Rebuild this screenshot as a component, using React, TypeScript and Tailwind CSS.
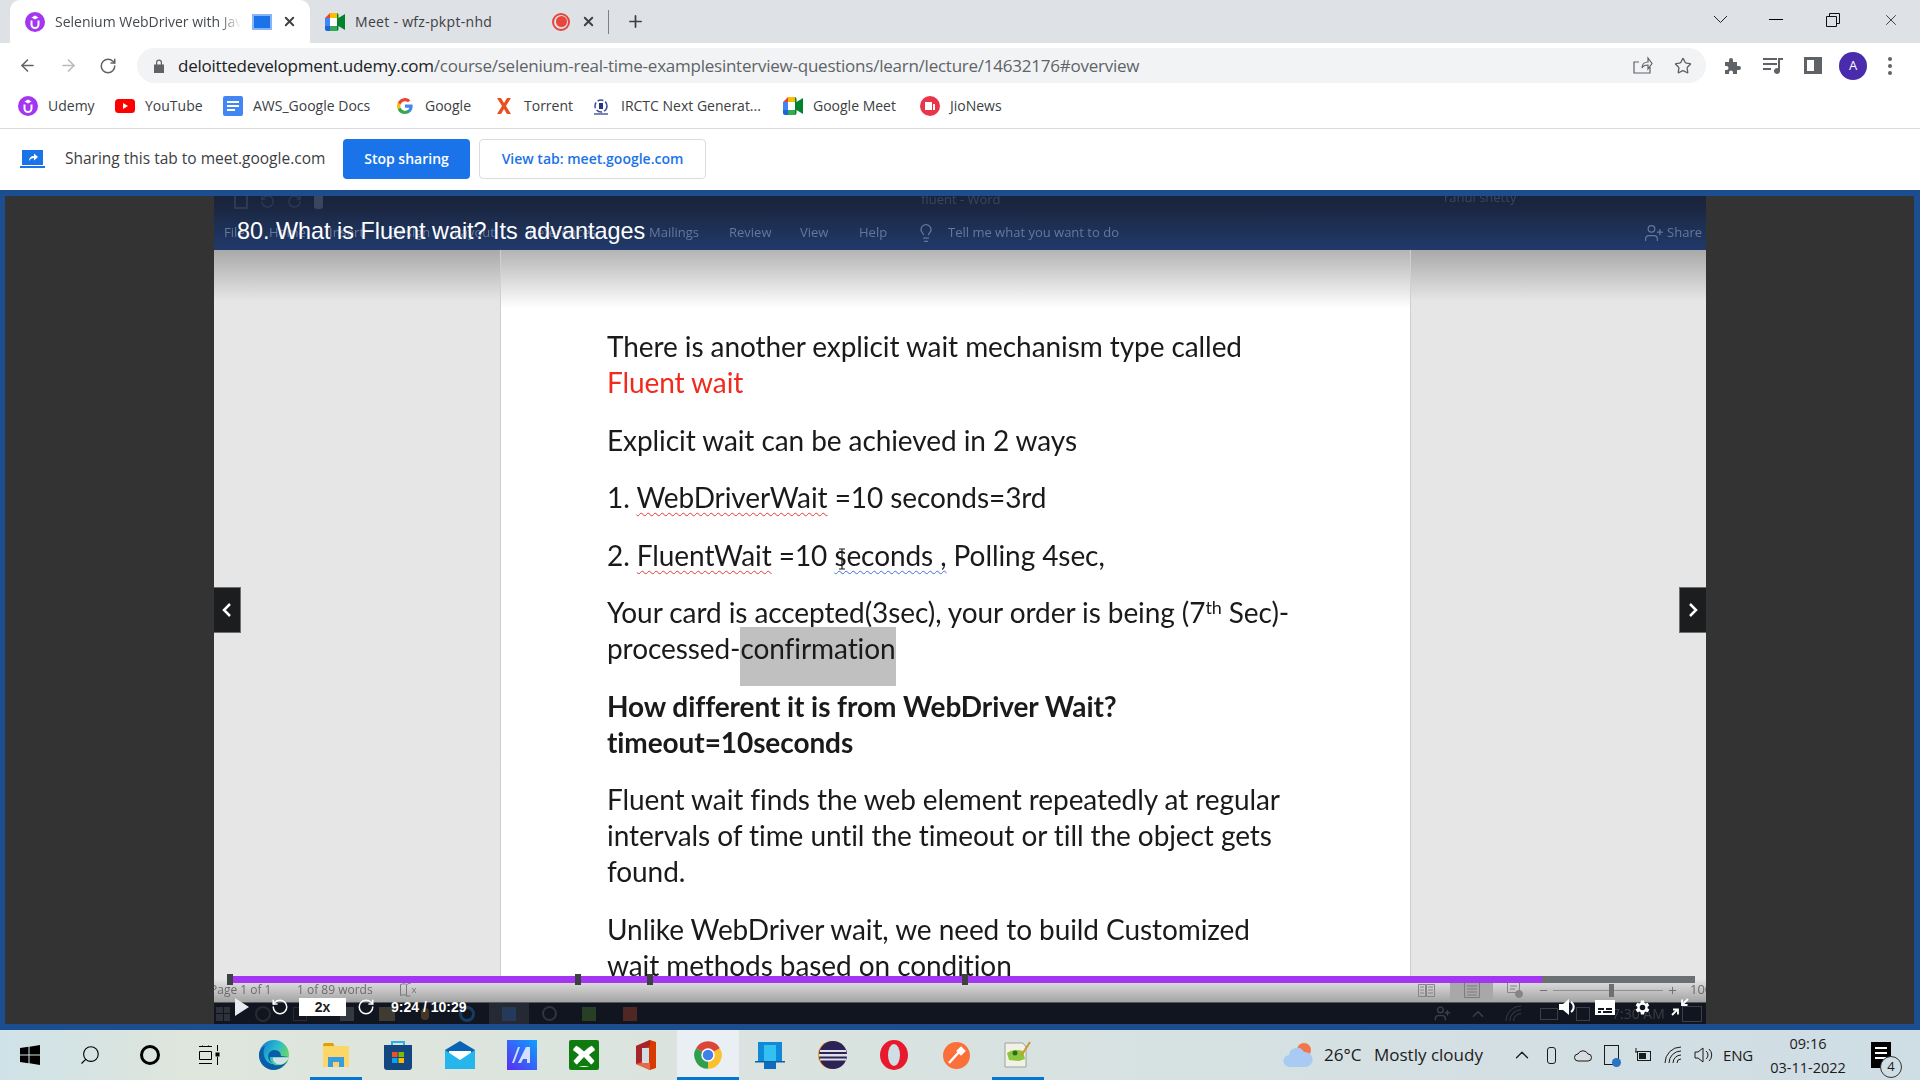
import { ArrowLeft, ArrowRight, ChevronUp, Lightbulb, Minus, Plus, RotateCw, Search, Star, UserPlus, X } from "lucide-react";
import type { ReactNode } from "react";

const UdemyIcon = () => (
  <svg width="20" height="20" viewBox="0 0 20 20">
    <circle cx="10" cy="10" r="10" fill="#a435f0" />
    <path d="M6.500 8.500v4a3.500 3.500 0 0 0 7 0v-4" fill="none" stroke="#fff" strokeWidth="2" />
    <path d="M10 3.500l3.500 2-3.500 2-3.500-2z" fill="#fff" />
  </svg>
);

const MeetIcon = () => (
  <svg width="20" height="18" viewBox="0 0 20 18">
    <path d="M0 5l5-5h7v5H5v4H0z" fill="#ea4335" />
    <path d="M5 0h7v5H5z" fill="#fbbc04" />
    <path d="M0 5h5v8H0z" fill="#4285f4" />
    <path d="M0 13h5v5H2a2 2 0 0 1-2-2z" fill="#1967d2" />
    <path d="M5 13h7v5H5z" fill="#34a853" />
    <path d="M12 0v18h0a2 2 0 0 0 1.500-2v-3L20 17V1l-6.500 4V2A2 2 0 0 0 12 0z" fill="#00832d" />
    <path d="M5 5h7v8H5z" fill="#fff" />
  </svg>
);

const GoogleIcon = () => (
  <svg width="16" height="16" viewBox="0 0 18 18">
    <path d="M17.600 9.200c0-.6-.1-1.200-.2-1.800H9v3.500h4.800a4 4 0 0 1-1.800 2.700v2.200h2.900c1.700-1.600 2.700-3.900 2.700-6.600z" fill="#4285f4" />
    <path d="M9 18c2.400 0 4.500-.8 5.900-2.200L12 13.600c-.8.500-1.800.9-3 .9-2.300 0-4.300-1.600-5-3.700H1v2.300A9 9 0 0 0 9 18z" fill="#34a853" />
    <path d="M4 10.700a5.400 5.400 0 0 1 0-3.400V5H1a9 9 0 0 0 0 8z" fill="#fbbc05" />
    <path d="M9 3.600c1.300 0 2.500.5 3.400 1.300L15 2.400A9 9 0 0 0 1 5l3 2.300c.7-2.100 2.700-3.700 5-3.700z" fill="#ea4335" />
  </svg>
);

const ChromeIcon = () => (
  <svg width="30" height="30" viewBox="0 0 24 24">
    <path d="M12 12L2.470 6.500A11 11 0 0 1 21.530 6.500Z" fill="#db4437" />
    <path d="M12 12L21.530 6.500A11 11 0 0 1 12 23Z" fill="#fbc02d" />
    <path d="M12 12L12 23A11 11 0 0 1 2.470 6.500Z" fill="#2e9e4f" />
    <circle cx="12" cy="12" r="5.400" fill="#fff" />
    <circle cx="12" cy="12" r="4.200" fill="#3f80ea" />
  </svg>
);

const bookmarks: { label: string; icon: ReactNode; width: string }[] = [
  { label: "Udemy", icon: <UdemyIcon />, width: "w-[97px]" },
  {
    label: "YouTube",
    icon: (
      <svg width="20" height="14" viewBox="0 0 20 14">
        <rect width="20" height="14" rx="3.500" fill="#f00" />
        <path d="M8 4l5 3-5 3z" fill="#fff" />
      </svg>
    ),
    width: "w-[108px]",
  },
  {
    label: "AWS_Google Docs",
    icon: (
      <svg width="20" height="20" viewBox="0 0 20 20">
        <rect width="20" height="20" rx="2" x="0" fill="#4285f4" />
        <path d="M4 5h12v2H4zM4 9h12v2H4zM4 13h8v2H4z" fill="#fff" />
      </svg>
    ),
    width: "w-[172px]",
  },
  { label: "Google", icon: <GoogleIcon />, width: "w-[99px]" },
  {
    label: "Torrent",
    icon: (
      <svg width="16" height="16" viewBox="0 0 16 16">
        <path d="M1 0h4l3 5 3-5h4l-5 8 5 8h-4l-3-5-3 5H1l5-8z" fill="#e8501f" />
      </svg>
    ),
    width: "w-[97px]",
  },
  {
    label: "IRCTC Next Generat...",
    icon: (
      <svg width="20" height="20" viewBox="0 0 20 20">
        <circle cx="10" cy="10" r="6" fill="none" stroke="#3b4f9c" strokeWidth="1.500" strokeDasharray="6 2" />
        <path d="M8 7h4v6H8z" fill="#27357e" />
        <path d="M3 18h14" stroke="#7b86b8" strokeWidth="2" />
      </svg>
    ),
    width: "w-[192px]",
  },
  { label: "Google Meet", icon: <MeetIcon />, width: "w-[137px]" },
  {
    label: "JioNews",
    icon: (
      <svg width="20" height="20" viewBox="0 0 20 20">
        <circle cx="10" cy="10" r="10" fill="#e8354a" />
        <path d="M5 6h7v8H5zM13 8h2v6h-2z" fill="#fff" />
      </svg>
    ),
    width: "w-auto",
  },
];

const TaskSlot = ({ children, active, running }: { children: ReactNode; active?: boolean; running?: boolean }) => (
  <div className={`relative flex h-[50px] w-[62px] items-center justify-center ${active ? "bg-[#eaeff4]" : ""}`}>
    {children}
    {active && <div className="absolute right-0 bottom-0 left-0 h-[3px] bg-[#0078d4]" />}
    {running && <div className="absolute right-[5px] bottom-0 left-[5px] h-[3px] bg-[#0078d4]" />}
  </div>
);

const Page = () => (
  <div className="h-full overflow-hidden bg-gradient-to-b from-[#b4b4b4] from-0% via-white via-[8%] to-white pt-[78px] pl-[106px] font-['Lato',sans-serif] text-[28px] leading-[36px] tracking-[-0.08px] text-[#1a1a1a] blur-[0.35px]">
    <p className="mb-[21.500px]">
      There is another explicit wait mechanism type called
      <br />
      <span className="text-[#f02b1d]">Fluent wait</span>
    </p>
    <p className="mb-[21.500px]">Explicit wait can be achieved in 2 ways</p>
    <p className="mb-[21.500px]">
      1. <span className="underline decoration-[#e53935] decoration-wavy decoration-1 underline-offset-4">WebDriverWait</span> =10 seconds=3rd
    </p>
    <p className="mb-[21.500px]">
      2. <span className="underline decoration-[#e53935] decoration-wavy decoration-1 underline-offset-4">FluentWait</span> =10{" "}
      <span className="relative underline decoration-[#3f6fd8] decoration-wavy decoration-1 underline-offset-4">
        seconds ,
        <svg width="10" height="22" viewBox="0 0 10 22" fill="none" stroke="#1a1a1a" strokeWidth="1.200" className="absolute top-[10px] left-[3px]">
          <path d="M2 1h6M5 1v20M2 21h6" />
        </svg>
      </span>{" "}
      Polling 4sec,
    </p>
    <p className="mb-[21.500px]">
      Your card is accepted(3sec), your order is being (7
      <sup className="text-[18px] leading-none">th</sup> Sec)-
      <br />
      processed-<span className="bg-[#c0c0c0] pt-[4px] pb-[21px]">confirmation</span>
    </p>
    <p className="mb-[21.500px] font-bold">
      How different it is from WebDriver Wait?
      <br />
      timeout=10seconds
    </p>
    <p className="mb-[21.500px]">
      Fluent wait finds the web element repeatedly at regular
      <br />
      intervals of time until the timeout or till the object gets
      <br />
      found.
    </p>
    <p>
      Unlike WebDriver wait, we need to build Customized
      <br />
      wait methods based on condition
    </p>
  </div>
);

const VideoPanel = () => (
  <div className="relative flex w-[1492px] flex-col overflow-hidden">
    {/* recorded word window */}
    <div className="relative h-[54px] shrink-0 bg-gradient-to-b from-[#192237] to-[#203a6b] font-['Open_Sans',sans-serif] text-[13px] text-[#66779a] blur-[0.4px]">
      <div className="absolute top-[-3px] left-[20px] flex items-center gap-[12px] text-[#2f3a52]">
        <div className="h-[16px] w-[14px] border-2 border-[#2f3a52]" />
        <RotateCw size={15} className="-scale-x-100" />
        <RotateCw size={15} />
        <div className="h-[15px] w-[9px] rounded-[3px] bg-[#3a465f]" />
      </div>
      <span className="absolute top-[-6px] left-[707px] text-[#3a465f]">fluent - Word</span>
      <span className="absolute top-[-8px] left-[1230px] text-[13px] text-[#3a465f]">rahul shetty</span>
      <div className="absolute top-[27px] left-[10px] flex h-[20px] items-center">
        <span className="w-[45px]">File</span>
        <span className="w-[60px]">Home</span>
        <span className="w-[60px]">Insert</span>
        <span className="w-[65px]">Design</span>
        <span className="w-[75px]">Layout</span>
        <span className="w-[120px]">References</span>
        <span className="w-[80px]">Mailings</span>
        <span className="w-[71px]">Review</span>
        <span className="w-[59px]">View</span>
        <span className="w-[57px]">Help</span>
        <Lightbulb size={20} strokeWidth={1.5} className="mr-[12px]" />
        <span>Tell me what you want to do</span>
      </div>
      <div className="absolute top-[27px] right-[4px] flex h-[20px] items-center gap-[3px]">
        <UserPlus size={20} strokeWidth={1.5} />
        <span>Share</span>
      </div>
    </div>

    <div className="flex min-h-0 flex-1">
      <div className="w-[287px] shrink-0 border-r border-[#cfcfcf] bg-gradient-to-b from-[#a9a9a9] from-0% via-[#e6e6e7] via-[7%] to-[#e6e6e7]" />
      <div className="w-[909px] shrink-0">
        <Page />
      </div>
      <div className="flex-1 border-l border-[#cfcfcf] bg-gradient-to-b from-[#a9a9a9] from-0% via-[#e6e6e7] via-[7%] to-[#e6e6e7]" />
    </div>

    {/* word status bar */}
    <div className="flex h-[25px] shrink-0 items-center justify-between border-b border-[#55585c] bg-gradient-to-b from-[#e8e8e8] to-[#a4a4a4] font-['Open_Sans',sans-serif] text-[12px] text-[#6b6b6b] blur-[0.3px]">
      <div className="flex items-center">
        <span className="ml-[-4px] w-[87px]">Page 1 of 1</span>
        <span className="w-[103px]">1 of 89 words</span>
        <svg width="17" height="14" viewBox="0 0 17 14" fill="none" stroke="#7a7a7a">
          <path d="M.5 1.500c3-1 5-1 6 .5v11c-1-1.500-3-1.500-6-.5zM6.500 2c1-1.500 2-1.500 4-1.500M6.500 13h4M12 5l4 5M16 5l-4 5" />
        </svg>
      </div>
      <div className="flex h-full items-center">
        <svg width="17" height="15" viewBox="0 0 17 15" fill="none" stroke="#858585" className="mr-[15px]">
          <path d="M.5 1.500h7v12h-7zM8.500 1.500h8v12h-8zM2 4h4M2 7h4M2 10h4M10 4h5M10 7h5M10 10h5" />
        </svg>
        <div className="flex h-full w-[43px] items-center justify-center bg-[#a8a8a8]">
          <svg width="16" height="16" viewBox="0 0 16 16" fill="none" stroke="#7c7c7c">
            <path d="M.5.500h15v15H.5zM3 4h10M3 7h10M3 10h10M3 13h10" />
          </svg>
        </div>
        <svg width="16" height="16" viewBox="0 0 16 16" fill="none" stroke="#858585" className="mr-[15px] ml-[14px]">
          <path d="M.5.500h12v10H.5zM3 4h7M3 7h5" />
          <circle cx="12" cy="12" r="3.500" fill="#858585" />
        </svg>
        <Minus size={11} />
        <div className="relative mx-[4px] h-[1px] w-[110px] bg-[#909090]">
          <div className="absolute top-[-6px] left-[56px] h-[13px] w-[5px] bg-[#6f6f6f]" />
        </div>
        <Plus size={11} />
        <span className="ml-[12px] w-[16px] overflow-hidden text-[13px]">100</span>
      </div>
    </div>

    {/* word window taskbar */}
    <div className="relative flex h-[21px] shrink-0 items-center overflow-hidden bg-[#11151f] pl-[2px] blur-[0.5px]">
      <div className="flex items-center opacity-50">
        <div className="grid h-[14px] w-[14px] grid-cols-2 gap-[1px]">
          <div className="bg-[#4a4e56]" />
          <div className="bg-[#4a4e56]" />
          <div className="bg-[#4a4e56]" />
          <div className="bg-[#4a4e56]" />
        </div>
        <div className="ml-[25px] h-[16px] w-[16px] rounded-full border-2 border-[#3e4249]" />
        <div className="ml-[22px] h-[14px] w-[14px] border border-[#3e4249]" />
        <div className="ml-[33px] h-[14px] w-[14px] bg-[#5a5d61]" />
        <div className="ml-[25px] h-[14px] w-[16px] bg-[#6d6248]" />
        <div className="ml-[26px] h-[12px] w-[8px] rounded-full bg-[#7a5a28]" />
        <div className="ml-[30px] h-[16px] w-[16px] rounded-full border-[3px] border-[#1b64a8]" />
        <div className="ml-[14px] flex h-[21px] w-[40px] items-center justify-center bg-[#3a3e48]">
          <div className="h-[14px] w-[14px] bg-[#3a5f96]" />
        </div>
        <div className="ml-[13px] h-[15px] w-[15px] rounded-full border-2 border-[#50545a]" />
        <div className="ml-[25px] h-[14px] w-[14px] bg-[#3e6b2a]" />
        <div className="ml-[27px] h-[14px] w-[14px] bg-[#8e3a2a]" />
      </div>
      <div className="absolute left-[1220px] flex items-center gap-[18px] text-[#3b3f46]">
        <UserPlus size={17} />
        <ChevronUp size={18} />
        <svg width="17" height="17" viewBox="0 0 18 18" fill="none" stroke="#3b3f46">
          <path d="M1 17A16 16 0 0 1 17 1M5 17A12 12 0 0 1 17 5M9 17a8 8 0 0 1 8-8" />
        </svg>
        <div className="h-[12px] w-[18px] border border-[#3b3f46]" />
        <div className="h-[14px] w-[14px] border border-[#3b3f46]" />
      </div>
      <span className="absolute left-[1398px] font-['Open_Sans',sans-serif] text-[14px] text-[#3b3f46]">7:30 AM</span>
      <div className="absolute left-[1468px] h-[16px] w-[20px] border border-[#3b3f46]" />
    </div>

    {/* overlay: course player */}
    <div className="absolute top-[18px] left-[23px] font-['Liberation_Sans',sans-serif] text-[23.400px] leading-[34px] text-white">
      80. What is Fluent wait? Its advantages
    </div>

    <button type="button" className="absolute top-[391px] left-0 flex h-[46px] w-[27px] items-center justify-center border border-l-0 border-[#6a6f73] bg-[#1c1d1f] text-white">
      <svg width="12" height="16" viewBox="0 0 12 16" fill="none" stroke="currentColor" strokeWidth="2.500"><path d="M9 2L3 8l6 6" /></svg>
    </button>
    <button type="button" className="absolute top-[391px] right-0 flex h-[46px] w-[27px] items-center justify-center border border-r-0 border-[#6a6f73] bg-[#1c1d1f] text-white">
      <svg width="12" height="16" viewBox="0 0 12 16" fill="none" stroke="currentColor" strokeWidth="2.500"><path d="M3 2l6 6-6 6" /></svg>
    </button>

    <div className="absolute top-[780px] left-[16px] h-[7px] w-[1465px] bg-[#6a6f73]">
      <div className="h-full w-[1312px] bg-[#a435f0]" />
      <div className="absolute top-[-2px] left-[-3px] h-[11px] w-[6px] bg-[#3e4143]" />
      <div className="absolute top-[-2px] left-[345px] h-[11px] w-[6px] bg-[#3e4143]" />
      <div className="absolute top-[-2px] left-[417px] h-[11px] w-[6px] bg-[#3e4143]" />
      <div className="absolute top-[-2px] left-[732px] h-[11px] w-[6px] bg-[#3e4143]" />
    </div>

    <div className="absolute top-[802px] left-[21px] flex h-[18px] items-center text-white">
      <svg width="14" height="18" viewBox="0 0 14 18" className="mr-[22px]"><path d="M0 0l14 9-14 9z" fill="#e8eaee" /></svg>
      <RotateCw size={18} strokeWidth={2} className="mr-[10px] -scale-x-100" />
      <span className="flex h-[18px] w-[47px] items-center justify-center bg-white font-['Liberation_Sans',sans-serif] text-[14px] font-bold text-[#1c1d1f]">2x</span>
      <RotateCw size={18} strokeWidth={2} className="mr-[16px] ml-[11px]" />
      <span className="font-['Liberation_Sans',sans-serif] text-[14px] font-bold">9:24 / 10:29</span>
    </div>

    <div className="absolute top-[801px] left-[1345px] flex h-[20px] items-center text-white">
      <svg width="18" height="18" viewBox="0 0 18 18" className="mr-[18px]">
        <path d="M0 6h4l6-5v16l-6-5H0z" fill="#fff" />
        <path d="M12 4a6 6 0 0 1 0 10" fill="none" stroke="#fff" strokeWidth="2" />
      </svg>
      <svg width="20" height="17" viewBox="0 0 20 17" className="mr-[18px]">
        <path d="M0 1h20v15H0zM3 9v2h6V9zm8 0v2h6V9zM3 12v2h3v-2zm5 0v2h9v-2z" fill="#fff" fillRule="evenodd" />
      </svg>
      <svg width="19" height="19" viewBox="0 0 24 24" className="mr-[19px]">
        <path d="M19.400 13a7.500 7.500 0 0 0 0-2l2.100-1.600-2-3.500-2.500 1a7.500 7.500 0 0 0-1.700-1L15 3.300h-4l-.4 2.600a7.500 7.500 0 0 0-1.700 1l-2.500-1-2 3.500L6.500 11a7.500 7.500 0 0 0 0 2l-2.100 1.600 2 3.500 2.500-1c.5.400 1.100.700 1.700 1l.4 2.600h4l.4-2.600c.6-.3 1.200-.6 1.700-1l2.500 1 2-3.500zM13 15.500a3.500 3.500 0 1 1 0-7 3.500 3.500 0 0 1 0 7z" fill="#fff" fillRule="evenodd" transform="translate(-1 0)" />
      </svg>
      <svg width="18" height="18" viewBox="0 0 18 18" fill="none" stroke="#fff" strokeWidth="1.800">
        <path d="M1 17l5-5M2 11.500h5v5M17 1l-5 5M11 1.500V7h5.500" />
      </svg>
    </div>
  </div>
);

const Taskbar = () => (
  <div className="flex h-[50px] shrink-0 items-center bg-gradient-to-r from-[#cfe2e8] via-[#dfe6dc] via-[10%] to-[#cfdde5] font-['Open_Sans',sans-serif] text-[#1b1b1b]">
    <div className="flex h-full w-[60px] items-center justify-center">
      <svg width="20" height="20" viewBox="0 0 20 20" fill="#000">
        <path d="M0 3l8.500-1.200v7.700H0zM9.500 1.700L20 0v9.500H9.500zM0 10.500h8.500v7.700L0 17zM9.500 10.500H20V20L9.500 18.300z" />
      </svg>
    </div>
    <div className="flex h-full w-[60px] items-center justify-center">
      <Search size={22} strokeWidth={1.2} className="-scale-x-100" color="#000" />
    </div>
    <div className="flex h-full w-[60px] items-center justify-center">
      <div className="h-[20px] w-[20px] rounded-full border-[3px] border-black" />
    </div>
    <div className="flex h-full w-[60px] items-center justify-center">
      <svg width="22" height="20" viewBox="0 0 22 20" fill="none" stroke="#000">
        <path d="M0 1.500h13M3.500 1.500V.5M9.500 1.500V.5M.5 6.500h12v8H.5zM0 18.500h13M18.500 0v6M18.500 12v8" />
        <rect x="17" y="8" width="3" height="3" fill="#000" />
      </svg>
    </div>
    <div className="ml-[3px] flex">
      <TaskSlot>
        <svg width="30" height="30" viewBox="0 0 30 30">
          <defs>
            <linearGradient id="edgeTop" x1="0" y1="0" x2="1" y2="0.600">
              <stop offset="0" stopColor="#0c70c4" />
              <stop offset="0.500" stopColor="#28b8d4" />
              <stop offset="1" stopColor="#6fdc5c" />
            </linearGradient>
          </defs>
          <circle cx="15" cy="15" r="15" fill="url(#edgeTop)" />
          <path d="M30 17H11a7 7 0 0 0 9 8c3 0 7-2 9-5-3 6-9 10-14 10C6 30 0 23 0 15c0-4 3-8 6-9-4 8 1 18 8 18-6-3-7-13 1-14 5 0 7 3 7 6z" fill="#0a5ea8" />
          <path d="M30 17.500H14c-1 4 3 7 7 7 3 0 6-2 8-5z" fill="#cfe2e8" />
        </svg>
      </TaskSlot>
      <TaskSlot running>
        <svg width="28" height="24" viewBox="0 0 28 24">
          <path d="M1 2a2 2 0 0 1 2-2h8l2 4H1z" fill="#dfa100" />
          <path d="M1 3h26v21H1z" fill="#fbd767" />
          <path d="M6 24V14h16v10h-5v-5h-6v5z" fill="#3b9be0" />
        </svg>
      </TaskSlot>
      <TaskSlot>
        <svg width="30" height="30" viewBox="0 0 30 30">
          <path d="M9 6V2h12v4" fill="none" stroke="#2ab2e8" strokeWidth="2" />
          <path d="M1 5h28v22a3 3 0 0 1-3 3H4a3 3 0 0 1-3-3z" fill="#14467f" />
          <path d="M9 12h5.500v5H9z" fill="#f25022" />
          <path d="M15.500 12H21v5h-5.500z" fill="#7fba00" />
          <path d="M9 18h5.500v5H9z" fill="#00a4ef" />
          <path d="M15.500 18H21v5h-5.500z" fill="#ffb900" />
        </svg>
      </TaskSlot>
      <TaskSlot>
        <svg width="30" height="28" viewBox="0 0 30 28">
          <path d="M0 9L15 0l15 9v19H0z" fill="#0a64b4" />
          <path d="M4 10h22v6l-11 7-11-7z" fill="#fff" />
          <path d="M0 9l15 10 15-10v19H0z" fill="#26b6ec" />
        </svg>
      </TaskSlot>
      <TaskSlot>
        <svg width="30" height="30" viewBox="0 0 30 30">
          <defs>
            <linearGradient id="appBlue" x1="0" y1="1" x2="1" y2="0">
              <stop offset="0" stopColor="#5b2df0" />
              <stop offset="1" stopColor="#0da0ff" />
            </linearGradient>
          </defs>
          <rect width="30" height="30" fill="url(#appBlue)" />
          <path d="M5 23L11 7h2L7 23zM11 23l8-16h4v16h-3v-4h-4l-2 4z" fill="#d5e0ff" />
        </svg>
      </TaskSlot>
      <TaskSlot>
        <svg width="30" height="30" viewBox="0 0 30 30">
          <rect width="30" height="30" rx="2" fill="#107c10" />
          <circle cx="15" cy="15" r="12" fill="#fff" />
          <path d="M15 11.500c-3-3-6-5-8-6L4 3h22l-3 2.500c-2 1-5 3-8 6z" fill="#107c10" />
          <path d="M15 17c-3 3-7 7-8 9h16c-1-2-5-6-8-9z" fill="#107c10" />
          <path d="M1 8c3 2 7 5 9 7-2 2-6 6-8 9zM29 8c-3 2-7 5-9 7 2 2 6 6 8 9z" fill="#107c10" />
        </svg>
      </TaskSlot>
      <TaskSlot>
        <svg width="24" height="30" viewBox="0 0 24 30">
          <path d="M16 0L2 6v18l14 6 6-2V2z" fill="#d83b01" />
          <path d="M16 0L2 6v18l6-3V9l8-3z" fill="#a4262c" />
          <path d="M8 8h7v16H8z" fill="#cfdde5" />
          <path d="M16 30l-14-6 6-1h8z" fill="#e8694a" />
        </svg>
      </TaskSlot>
      <TaskSlot active>
        <ChromeIcon />
      </TaskSlot>
      <TaskSlot>
        <svg width="30" height="28" viewBox="0 0 30 28">
          <path d="M3 1h24v20H3z" fill="#0f8ad8" />
          <path d="M9 4h12v18H9z" fill="#35c0f2" />
          <path d="M0 20h30v1.500H0z" fill="#115ea3" />
          <path d="M9 21h12v7H9z" fill="#0f6cbd" />
        </svg>
      </TaskSlot>
      <TaskSlot>
        <svg width="30" height="28" viewBox="0 0 30 28">
          <circle cx="15" cy="14" r="14" fill="#f7941e" />
          <circle cx="16" cy="14" r="14" fill="#2c2255" />
          <path d="M3 9h26v2H3zM2 13h28v2.500H2zM3 17.500h26v2H3z" fill="#dfe0e8" />
        </svg>
      </TaskSlot>
      <TaskSlot>
        <svg width="28" height="30" viewBox="0 0 28 30">
          <ellipse cx="14" cy="15" rx="14" ry="15" fill="#e8192c" />
          <ellipse cx="14" cy="15" rx="6" ry="11" fill="#cfdde5" />
        </svg>
      </TaskSlot>
      <TaskSlot>
        <svg width="27" height="27" viewBox="0 0 27 27">
          <circle cx="13.500" cy="13.500" r="13.500" fill="#fb6f3b" />
          <path d="M6 21l10-11M15 9l3-3 3 3-3 3z" stroke="#fff" strokeWidth="2.500" fill="#fff" />
        </svg>
      </TaskSlot>
      <TaskSlot running>
        <svg width="28" height="28" viewBox="0 0 28 28">
          <path d="M1 2h18l3 4v20H1z" fill="#f2f2e4" stroke="#9aa0a6" />
          <path d="M3 12c4-3 10-4 16-2l2 8-6 2-10-1z" fill="#8ec53f" />
          <circle cx="11" cy="12" r="2.500" fill="#2e6b1a" />
          <path d="M17 15L26 1" stroke="#c79a2a" strokeWidth="2" />
        </svg>
      </TaskSlot>
    </div>

    <div className="ml-auto flex h-full items-center">
      <svg width="30" height="26" viewBox="0 0 30 26" className="mr-[11px]">
        <circle cx="21" cy="8" r="7" fill="#f4754b" />
        <path d="M7 25a6 6 0 0 1-1-12 8 8 0 0 1 15-3 7.500 7.500 0 0 1 2 15z" fill="#a9caf3" />
      </svg>
      <span className="mr-[12px] w-[38px] text-[17px] whitespace-nowrap">26°C</span>
      <span className="w-[137px] text-[17px] whitespace-nowrap">Mostly cloudy</span>
      <ChevronUp size={22} strokeWidth={1.4} className="mr-[14px]" />
      <div className="mr-[18px] h-[17px] w-[9px] rounded-[3px] border border-[#1b1b1b]" />
      <svg width="18" height="14" viewBox="0 0 18 14" className="mr-[12px]">
        <path d="M4 13a3.500 3.500 0 0 1 0-7 5.500 5.500 0 0 1 10 0 3.500 3.500 0 0 1 0 7z" fill="#d9dde0" stroke="#1b1b1b" />
      </svg>
      <div className="relative mr-[14px] h-[20px] w-[15px] border border-[#1b1b1b]">
        <div className="absolute right-[-3px] bottom-[-3px] h-[9px] w-[9px] rounded-full bg-[#2a73c5]" />
      </div>
      <svg width="18" height="14" viewBox="0 0 18 14" className="mr-[13px]">
        <path d="M3 0v4M2 4h3" stroke="#1b1b1b" />
        <rect x="4.500" y="3.500" width="13" height="9" fill="none" stroke="#1b1b1b" />
        <rect x="6" y="5" width="7" height="6" fill="#1b1b1b" />
      </svg>
      <svg width="18" height="18" viewBox="0 0 18 18" fill="none" stroke="#1b1b1b" className="mr-[12px]">
        <path d="M1 17A16 16 0 0 1 17 1M5 17A12 12 0 0 1 17 5M9 17a8 8 0 0 1 8-8M13 17a4 4 0 0 1 4-4" />
      </svg>
      <svg width="20" height="18" viewBox="0 0 20 18" fill="none" stroke="#1b1b1b" className="mr-[9px]">
        <path d="M1 6h3l5-4v14l-5-4H1zM12 5a5 5 0 0 1 0 8M15 3a8 8 0 0 1 0 12" />
      </svg>
      <span className="w-[43px] text-[15px] tracking-[-0.2px]">ENG</span>
      <div className="mr-[21px] flex w-[84px] flex-col items-center gap-[3px] text-[14.500px] leading-[21px]">
        <span>09:16</span>
        <span className="whitespace-nowrap">03-11-2022</span>
      </div>
      <div className="relative mr-[29px] h-[26px] w-[20px] bg-black">
        <div className="mx-[4px] mt-[5px] h-[2px] bg-white" />
        <div className="mx-[4px] mt-[3px] h-[2px] bg-white" />
        <div className="mx-[4px] mt-[3px] h-[2px] bg-white" />
        <span className="absolute right-[-11px] bottom-[-10px] flex h-[22px] w-[22px] items-center justify-center rounded-full border border-[#333] bg-[#cfdde5] text-[13px]">4</span>
      </div>
    </div>
  </div>
);

const App = () => {
  return (
    <div className="flex h-[1080px] w-[1920px] flex-col overflow-hidden bg-white font-['Open_Sans',sans-serif]">
      {/* tab strip */}
      <div className="relative flex h-[43px] shrink-0 items-center bg-[#dee1e6] pl-[10px] text-[14px] text-[#3c4043]">
        <div className="flex h-[43px] w-[300px] items-center self-end rounded-t-[10px] bg-white pl-[15px]">
          <UdemyIcon />
          <span className="mr-[11px] ml-[10px] w-[186px] overflow-hidden whitespace-nowrap text-[#45494e] [mask-image:linear-gradient(to_right,black_88%,transparent)]">Selenium WebDriver with Java</span>
          <div className="h-[16px] w-[20px] border-2 border-[#8ab4f8] bg-[#1a73e8]" />
          <X size={15} strokeWidth={3} className="ml-[10px]" />
        </div>
        <div className="flex items-center pl-[15px]">
          <MeetIcon />
          <span className="ml-[10px] w-[197px] tracking-[0.3px] whitespace-nowrap">Meet - wfz-pkpt-nhd</span>
          <div className="flex h-[18px] w-[18px] items-center justify-center rounded-full border-2 border-[#e8453c]">
            <div className="h-[11px] w-[11px] rounded-full bg-[#e8453c]" />
          </div>
          <X size={15} strokeWidth={3} className="ml-[11px]" />
          <div className="ml-[12px] h-[24px] w-[1px] bg-[#7d8186]" />
          <Plus size={19} strokeWidth={2.2} className="ml-[17px]" />
        </div>
        <div className="mb-[4px] ml-auto flex items-center text-[#222]">
          <svg width="15" height="9" viewBox="0 0 15 9" fill="none" stroke="#222" className="mr-[41px]"><path d="M1 1l6.500 6.500L14 1" /></svg>
          <div className="mr-[43px] h-[1px] w-[14px] bg-black" />
          <svg width="14" height="14" viewBox="0 0 14 14" fill="none" stroke="#111" className="mr-[42px]"><path d="M.5 3.500h10v10H.5zM3.500 3V.5h10v10H11" /></svg>
          <X size={18} strokeWidth={1.1} className="mr-[20px]" />
        </div>
      </div>

      {/* toolbar */}
      <div className="flex h-[45px] shrink-0 items-center pl-[18px]">
        <ArrowLeft size={19} strokeWidth={2} color="#5f6368" />
        <ArrowRight size={19} strokeWidth={2} color="#b8bbbf" className="ml-[22px]" />
        <RotateCw size={18} strokeWidth={2} color="#5f6368" className="ml-[21px]" />
        <div className="ml-[20px] flex h-[35px] w-[1569px] items-center rounded-full bg-[#f1f3f4] pl-[16px]">
          <svg width="12" height="14" viewBox="0 0 12 14" fill="#5f6368">
            <path d="M1 5.500h10V14H1zM3 6V3.500a3 3 0 0 1 6 0V6H7.800V3.500a1.800 1.800 0 0 0-3.600 0V6z" />
          </svg>
          <span className="ml-[13px] text-[17px] tracking-[-0.24px] whitespace-nowrap text-[#202124]">
            deloittedevelopment.udemy.com<span className="text-[#5f6368]">/course/selenium-real-time-examplesinterview-questions/learn/lecture/14632176#overview</span>
          </span>
          <svg width="20" height="19" viewBox="0 0 20 19" fill="none" stroke="#5f6368" strokeWidth="1.200" className="mr-[21px] ml-auto">
            <path d="M17 11v6H1V6h5M9 12c0-4 3-6 6-6V2l4 5.500L15 13V9c-3 0-5 1-6 3z" />
          </svg>
          <Star size={18} strokeWidth={1.8} color="#5f6368" className="mr-[14px]" />
        </div>
        <svg width="18" height="18" viewBox="0 0 18 18" fill="#5f6368" className="ml-[18px]">
          <path d="M1 5h4V3a2 2 0 0 1 4 0v2h4v4h2a2 2 0 0 1 0 4h-2v4H9v-1.500a2 2 0 0 0-4 0V17H1v-4h1.500a2 2 0 0 0 0-4H1z" />
        </svg>
        <svg width="20" height="18" viewBox="0 0 20 18" className="ml-[21px]" fill="#5f6368">
          <path d="M0 1h14v2H0zM0 6h14v2H0zM0 11h8v2H0zM15 1h5v2h-3v11a3 3 0 1 1-2-2.800z" />
        </svg>
        <div className="ml-[21px] flex h-[17px] w-[18px] justify-end border-[3px] border-r-[8px] border-[#5f6368] bg-white" />
        <div className="ml-[17px] flex h-[28px] w-[28px] items-center justify-center rounded-full bg-[#4a2aad] text-[13px] text-white">A</div>
        <div className="ml-[21px] flex flex-col gap-[3px]">
          <div className="h-[4px] w-[4px] rounded-full bg-[#5f6368]" />
          <div className="h-[4px] w-[4px] rounded-full bg-[#5f6368]" />
          <div className="h-[4px] w-[4px] rounded-full bg-[#5f6368]" />
        </div>
      </div>

      {/* bookmarks */}
      <div className="flex h-[41px] shrink-0 items-center border-b border-[#dadce0] pb-[5px] pl-[18px] text-[14px] text-[#3c4043]">
        {bookmarks.map((b) => (
          <div key={b.label} className={`flex items-center ${b.width}`}>
            <div className="flex w-[20px] justify-center">{b.icon}</div>
            <span className="ml-[10px] whitespace-nowrap">{b.label}</span>
          </div>
        ))}
      </div>

      {/* sharing infobar */}
      <div className="flex h-[61px] shrink-0 items-center pb-[2px] pl-[20px] text-[15.500px] text-[#3c4043]">
        <svg width="25" height="18" viewBox="0 0 25 18">
          <path d="M2 0h21v15H2z" fill="#1a73e8" />
          <path d="M0 16h25v2H0z" fill="#1a73e8" />
          <path d="M9 11c0-3 2-5 5-5V3.500l4 3.500-4 3.500V8c-2 0-4 1-5 3z" fill="#fff" />
        </svg>
        <span className="ml-[20px] w-[278px] whitespace-nowrap">Sharing this tab to meet.google.com</span>
        <button type="button" className="flex h-[40px] w-[127px] items-center justify-center rounded-[4px] bg-[#1a73e8] text-[14px] font-semibold text-white">Stop sharing</button>
        <button type="button" className="ml-[9px] flex h-[40px] w-[227px] items-center justify-center rounded-[4px] border border-[#dadce0] text-[14px] font-semibold text-[#1a73e8]">View tab: meet.google.com</button>
      </div>

      {/* shared tab, blue frame */}
      <div className="flex min-h-0 flex-1 border-t-[6px] border-r-[6px] border-b-[6px] border-l-[5px] border-[#1c4d8f]">
        <div className="w-[209px] bg-[#333333]" />
        <VideoPanel />
        <div className="flex-1 bg-[#333333]" />
      </div>

      <Taskbar />
    </div>
  );
};

export default App;
